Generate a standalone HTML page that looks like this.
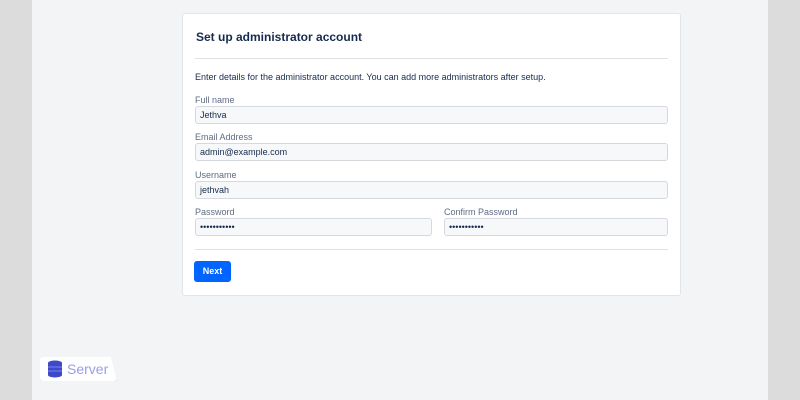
<!DOCTYPE html>
<html><head><style>
*{box-sizing:border-box;margin:0;padding:0}
body{width:800px;height:400px;overflow:hidden;background:#dcdcdc;font-family:"Liberation Sans",sans-serif;position:relative}
.main{position:absolute;left:32px;top:0;width:736px;height:400px;background:#f3f4f6}
.card{position:absolute;left:182px;top:13px;width:499px;height:283px;background:#fff;border:1px solid #e2e4e8;border-radius:3px}
h1{position:absolute;left:13px;top:16px;font-size:12px;font-weight:bold;color:#172b4d}
.hr{position:absolute;left:12px;right:12px;height:1px;background:#dfe1e6}
.t{position:absolute;font-size:9px;color:#172b4d}
.l{position:absolute;font-size:9px;color:#5e6c84}
.in{position:absolute;height:18px;background:#f7f8fa;border:1px solid #d5d8dd;border-radius:3px;font-size:9px;color:#172b4d;padding:3px 4px}
.btn{position:absolute;left:11px;top:247px;width:37px;height:21px;background:#0065ff;border-radius:3px;color:#fff;font-size:9px;font-weight:bold;text-align:center;line-height:21px}
.logo{position:absolute;left:40px;top:357px;width:77px;height:24px;background:#fff;border-radius:3px;box-shadow:1px 2px 3px rgba(0,0,0,.15);clip-path:polygon(0 0,92% 0,100% 100%,0 100%);padding-left:27px;font-size:14px;color:#9a9ee6;line-height:24px}
</style></head><body>
<div class="main"></div>
<div class="card">
<h1>Set up administrator account</h1>
<div class="hr" style="top:44px"></div>
<div class="t" style="left:12px;top:58px">Enter details for the administrator account. You can add more administrators after setup.</div>
<div class="l" style="left:12px;top:81px">Full name</div>
<div class="in" style="left:12px;top:92px;width:473px">Jethva</div>
<div class="l" style="left:12px;top:118px">Email Address</div>
<div class="in" style="left:12px;top:129px;width:473px">admin@example.com</div>
<div class="l" style="left:12px;top:156px">Username</div>
<div class="in" style="left:12px;top:167px;width:473px">jethvah</div>
<div class="l" style="left:12px;top:193px">Password</div>
<div class="in" style="left:12px;top:204px;width:237px">•••••••••••</div>
<div class="l" style="left:261px;top:193px">Confirm Password</div>
<div class="in" style="left:261px;top:204px;width:224px">•••••••••••</div>
<div class="hr" style="top:235px"></div>
<div class="btn">Next</div>
</div>
<div class="logo">Server
<svg style="position:absolute;left:7px;top:3px" width="16" height="18" viewBox="0 0 16 18"><ellipse cx="8" cy="3" rx="7" ry="2.5" fill="#3d49c9"/><rect x="1" y="3" width="14" height="12" fill="#3d49c9"/><ellipse cx="8" cy="15" rx="7" ry="2.5" fill="#3d49c9"/><path d="M1 7h14M1 11h14" stroke="#7a85f0" stroke-width="1"/></svg></div>
</body></html>
